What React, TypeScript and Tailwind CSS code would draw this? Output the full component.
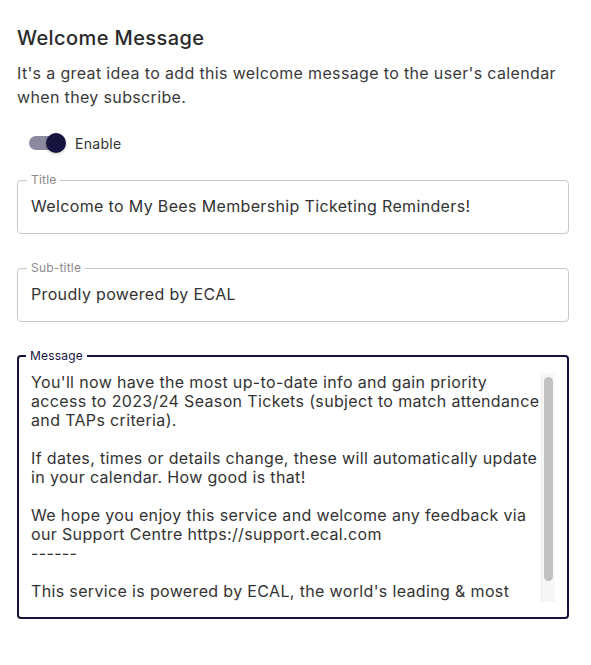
import React, { useState } from 'react';

const FONT = 'font-["Inter","Noto_Sans",sans-serif]';

const MESSAGE = `You'll now have the most up-to-date info and gain priority
access to 2023/24 Season Tickets (subject to match attendance
and TAPs criteria).

If dates, times or details change, these will automatically update
in your calendar. How good is that!

We hope you enjoy this service and welcome any feedback via
our Support Centre https://support.ecal.com
------

This service is powered by ECAL, the world's leading & most
trusted calendar marketing platform.`;

interface FieldProps {
  label: string;
  value: string;
  onChange: (v: string) => void;
}

const TextField: React.FC<FieldProps> = ({ label, value, onChange }) => (
  <fieldset className="border border-[#c8c8c8] rounded-[4px] px-[13px] pb-[7px] min-w-0">
    <legend className="ml-[-4px] px-[4px] text-[12px] leading-[12px] text-[#8a8a8a] tracking-[0.2px]">{label}</legend>
    <input
      className="w-full h-[40px] outline-none bg-transparent text-[16px] tracking-[0.35px] text-[#333333]"
      value={value}
      onChange={(e) => onChange(e.target.value)}
    />
  </fieldset>
);

export default function App() {
  const [enabled, setEnabled] = useState(true);
  const [title, setTitle] = useState('Welcome to My Bees Membership Ticketing Reminders!');
  const [subtitle, setSubtitle] = useState('Proudly powered by ECAL');
  const [message, setMessage] = useState(MESSAGE);

  return (
    <div className={`${FONT} w-[591px] bg-white pl-[17px] pr-[22px] pt-[26px] pb-[40px] text-[#333333]`}>
      <h2 className="text-[20px] leading-[24px] font-medium tracking-[0.4px] text-[#2a2a2a]">Welcome Message</h2>
      <p className="mt-[11px] text-[16px] leading-[24px] tracking-[0.35px] text-[#3a3a3a]">
        It's a great idea to add this welcome message to the user's calendar when they subscribe.
      </p>

      {/* switch */}
      <label className="mt-[15px] flex items-center h-[38px] cursor-pointer w-fit">
        <span className="relative w-[58px] h-[38px] p-[12px]">
          <input
            type="checkbox"
            className="sr-only"
            checked={enabled}
            onChange={() => setEnabled(!enabled)}
          />
          <span
            className={`block w-[34px] h-[14px] rounded-full ${enabled ? 'bg-[#16133f]/50' : 'bg-[#b0b0b0]'}`}
          />
          <span
            className={`absolute top-[9px] w-[20px] h-[20px] rounded-full shadow-[0_1px_3px_rgba(0,0,0,0.25)] ${
              enabled ? 'left-[29px] bg-[#16133f]' : 'left-[9px] bg-white'
            }`}
          />
        </span>
        <span className="text-[14px] tracking-[0.3px] text-[#333333]">Enable</span>
      </label>

      <div className="mt-[12px] flex flex-col gap-[28px]">
        <TextField label="Title" value={title} onChange={setTitle} />
        <TextField label="Sub-title" value={subtitle} onChange={setSubtitle} />

        <fieldset className="border-2 border-[#16133f] rounded-[4px] px-[12px] pt-[11px] pb-[15px] min-w-0">
          <legend className="ml-[-5px] px-[4px] text-[12px] leading-[12px] tracking-[0.2px] text-[#16133f]">Message</legend>
          <div className="flex h-[229px]">
            <textarea
              className="flex-1 min-w-0 h-full resize-none outline-none overflow-hidden text-[16px] leading-[19px] tracking-[0.35px] text-[#333333]"
              value={message}
              onChange={(e) => setMessage(e.target.value)}
            />
            {/* scrollbar */}
            <div className="w-[14px] h-full bg-[#f7f7f7] border-l border-[#ececec] pt-[4px] pb-[21px] px-[2px]">
              <div className="w-full h-full rounded-full bg-[#c1c1c1]" />
            </div>
          </div>
        </fieldset>
      </div>
    </div>
  );
}
